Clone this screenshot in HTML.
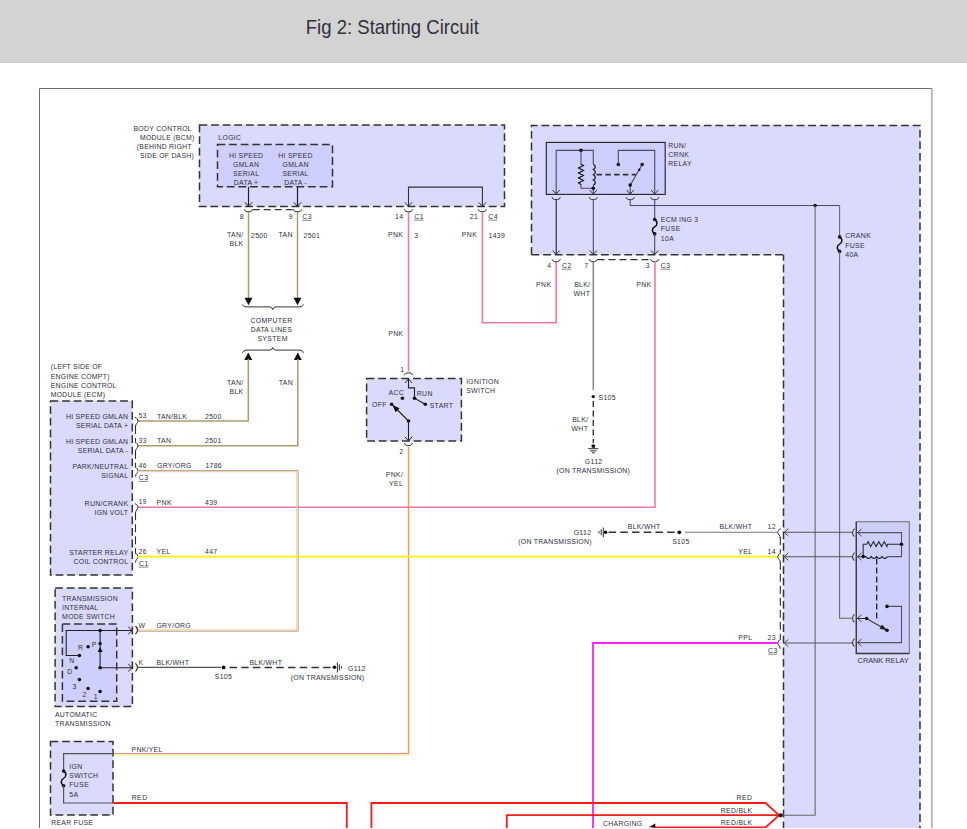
<!DOCTYPE html>
<html><head><meta charset="utf-8"><style>
html,body{margin:0;padding:0;background:#fff;width:967px;height:829px;overflow:hidden}
svg{display:block;font-family:"Liberation Sans",sans-serif}
</style></head><body>
<svg width="967" height="829" viewBox="0 0 967 829">
<rect x="0" y="0" width="967" height="63" fill="#d3d3d3"/>
<rect x="0" y="62" width="967" height="1" fill="#cacaca"/>
<text x="305.8" y="33.8" font-size="20.8" fill="#30303f" textLength="173" lengthAdjust="spacingAndGlyphs">Fig 2: Starting Circuit</text>
<path d="M39.5,829 L39.5,88.5 L931.8,88.5" fill="none" stroke="#6e6e6e" stroke-width="1"/>
<path d="M931.9,88.5 L931.9,829" fill="none" stroke="#9a9a9a" stroke-width="1.3"/>
<path d="M531.5,125.5 L920,125.5 L920,829 L783.5,829 L783.5,254.8 L531.5,254.8 Z" fill="#dadaff" stroke="none"/>
<path d="M531.5,254.8 L531.5,125.5 L920,125.5 L920,829" fill="none" stroke="#333" stroke-width="1.5" stroke-dasharray="7.8 3.8"/>
<path d="M531.5,254.8 L783.5,254.8" fill="none" stroke="#333" stroke-width="1.5" stroke-dasharray="7.8 3.8"/>
<path d="M783.5,254.8 L783.5,829" fill="none" stroke="#333" stroke-width="1.5" stroke-dasharray="7.8 3.8" stroke-dashoffset="1.8"/>
<rect x="199.5" y="125" width="305.0" height="81.5" fill="#dadaff" stroke="#333" stroke-width="1.5" stroke-dasharray="7.8 3.8"/>
<rect x="217.5" y="144.5" width="115.0" height="42.30000000000001" fill="#cfcfff" stroke="#333" stroke-width="1.5" stroke-dasharray="7.8 3.8"/>
<text x="218.3" y="140.1" font-size="6.90" fill="#30303e" text-anchor="start" textLength="22.72" lengthAdjust="spacing">LOGIC</text>
<text x="246" y="158.2" font-size="6.90" fill="#30303e" text-anchor="middle" textLength="34.08" lengthAdjust="spacing">HI SPEED</text>
<text x="246" y="167.2" font-size="6.90" fill="#30303e" text-anchor="middle" textLength="25.96" lengthAdjust="spacing">GMLAN</text>
<text x="246" y="176.2" font-size="6.90" fill="#30303e" text-anchor="middle" textLength="25.97" lengthAdjust="spacing">SERIAL</text>
<text x="246" y="185.2" font-size="6.90" fill="#30303e" text-anchor="middle" textLength="24.27" lengthAdjust="spacing">DATA +</text>
<text x="295.4" y="158.2" font-size="6.90" fill="#30303e" text-anchor="middle" textLength="34.08" lengthAdjust="spacing">HI SPEED</text>
<text x="295.4" y="167.2" font-size="6.90" fill="#30303e" text-anchor="middle" textLength="25.96" lengthAdjust="spacing">GMLAN</text>
<text x="295.4" y="176.2" font-size="6.90" fill="#30303e" text-anchor="middle" textLength="25.97" lengthAdjust="spacing">SERIAL</text>
<text x="295.4" y="185.2" font-size="6.90" fill="#30303e" text-anchor="middle" textLength="22.44" lengthAdjust="spacing">DATA -</text>
<text x="133.4" y="131.2" font-size="6.90" fill="#30303e" text-anchor="start" textLength="58.27" lengthAdjust="spacing">BODY CONTROL</text>
<text x="139.9" y="140.2" font-size="6.90" fill="#30303e" text-anchor="start" textLength="54.34" lengthAdjust="spacing">MODULE (BCM)</text>
<text x="136.8" y="149.2" font-size="6.90" fill="#30303e" text-anchor="start" textLength="54.75" lengthAdjust="spacing">(BEHIND RIGHT</text>
<text x="139.9" y="158.2" font-size="6.90" fill="#30303e" text-anchor="start" textLength="53.94" lengthAdjust="spacing">SIDE OF DASH)</text>
<path d="M248.5,186.8 L248.5,206.5" fill="none" stroke="#222" stroke-width="1.2"/>
<path d="M244.9,202.3 L248.5,206.3 L252.1,202.3" fill="none" stroke="#222" stroke-width="1"/>
<path d="M244.3,209.3 Q245.3,211.70000000000002 247.0,211.70000000000002 L250.0,211.70000000000002 Q251.7,211.70000000000002 252.7,209.3" fill="none" stroke="#333" stroke-width="1"/>
<path d="M297.5,186.8 L297.5,206.5" fill="none" stroke="#222" stroke-width="1.2"/>
<path d="M293.9,202.3 L297.5,206.3 L301.1,202.3" fill="none" stroke="#222" stroke-width="1"/>
<path d="M293.3,209.3 Q294.3,211.70000000000002 296.0,211.70000000000002 L299.0,211.70000000000002 Q300.7,211.70000000000002 301.7,209.3" fill="none" stroke="#333" stroke-width="1"/>
<path d="M252.7,209.6 L293.3,209.6" fill="none" stroke="#333" stroke-width="1.2" stroke-dasharray="7 4"/>
<path d="M248.5,212 L248.5,299" fill="none" stroke="#ad9c6c" stroke-width="1.5"/>
<path d="M244.5,297.8 L252.5,297.8 L248.5,305.3 Z" fill="#111"/>
<path d="M297.5,212 L297.5,299" fill="none" stroke="#ad9c6c" stroke-width="1.5"/>
<path d="M293.5,297.8 L301.5,297.8 L297.5,305.3 Z" fill="#111"/>
<text x="243.5" y="219.1" font-size="6.90" fill="#30303e" text-anchor="end">8</text>
<text x="292.6" y="219.1" font-size="6.90" fill="#30303e" text-anchor="end">9</text>
<text x="302.3" y="219.1" font-size="6.90" fill="#30303e" text-anchor="start" textLength="9.33" lengthAdjust="spacing">C3</text>
<line x1="302.3" y1="220.3" x2="311.6" y2="220.3" stroke="#30303e" stroke-width="0.6"/>
<text x="243.2" y="237.2" font-size="6.90" fill="#30303e" text-anchor="end" textLength="16.09" lengthAdjust="spacing">TAN/</text>
<text x="243.2" y="246.3" font-size="6.90" fill="#30303e" text-anchor="end" textLength="13.80" lengthAdjust="spacing">BLK</text>
<text x="251" y="238.1" font-size="6.90" fill="#30303e" text-anchor="start" textLength="16.24" lengthAdjust="spacing">2500</text>
<text x="292.6" y="237.2" font-size="6.90" fill="#30303e" text-anchor="end" textLength="14.06" lengthAdjust="spacing">TAN</text>
<text x="303.5" y="238.1" font-size="6.90" fill="#30303e" text-anchor="start" textLength="16.24" lengthAdjust="spacing">2501</text>
<path d="M408.5,206.5 L408.5,187.1 L482.4,187.1 L482.4,206.5" fill="none" stroke="#333" stroke-width="1.1"/>
<path d="M404.9,202.3 L408.5,206.3 L412.1,202.3" fill="none" stroke="#333" stroke-width="1"/>
<path d="M478.79999999999995,202.3 L482.4,206.3 L486.0,202.3" fill="none" stroke="#333" stroke-width="1"/>
<path d="M404.3,209.3 Q405.3,211.70000000000002 407.0,211.70000000000002 L410.0,211.70000000000002 Q411.7,211.70000000000002 412.7,209.3" fill="none" stroke="#333" stroke-width="1"/>
<path d="M478.2,209.3 Q479.2,211.70000000000002 480.9,211.70000000000002 L483.9,211.70000000000002 Q485.59999999999997,211.70000000000002 486.59999999999997,209.3" fill="none" stroke="#333" stroke-width="1"/>
<text x="403.1" y="218.9" font-size="6.90" fill="#30303e" text-anchor="end" textLength="8.12" lengthAdjust="spacing">14</text>
<text x="414.3" y="218.9" font-size="6.90" fill="#30303e" text-anchor="start" textLength="9.33" lengthAdjust="spacing">C1</text>
<line x1="414.3" y1="220.1" x2="423.6" y2="220.1" stroke="#30303e" stroke-width="0.6"/>
<text x="477.9" y="218.9" font-size="6.90" fill="#30303e" text-anchor="end" textLength="8.12" lengthAdjust="spacing">21</text>
<text x="488.2" y="218.9" font-size="6.90" fill="#30303e" text-anchor="start" textLength="9.33" lengthAdjust="spacing">C4</text>
<line x1="488.2" y1="220.1" x2="497.5" y2="220.1" stroke="#30303e" stroke-width="0.6"/>
<text x="402.9" y="237.1" font-size="6.90" fill="#30303e" text-anchor="end" textLength="15.01" lengthAdjust="spacing">PNK</text>
<text x="414.3" y="237.7" font-size="6.90" fill="#30303e" text-anchor="start">3</text>
<text x="476.8" y="237.1" font-size="6.90" fill="#30303e" text-anchor="end" textLength="15.01" lengthAdjust="spacing">PNK</text>
<text x="488.6" y="237.7" font-size="6.90" fill="#30303e" text-anchor="start" textLength="16.24" lengthAdjust="spacing">1439</text>
<path d="M408.5,212 L408.5,371.5" fill="none" stroke="#f5789c" stroke-width="1.6"/>
<path d="M482.4,212 L482.4,322.7 L556.2,322.7 L556.2,261" fill="none" stroke="#f5789c" stroke-width="1.6"/>
<text x="403.2" y="336.1" font-size="6.90" fill="#30303e" text-anchor="end" textLength="15.01" lengthAdjust="spacing">PNK</text>
<text x="404" y="371.9" font-size="6.43" fill="#30303e" text-anchor="end">1</text>
<path d="M242.5,304.4 Q243.5,306.9 246,306.9 L270,306.9 Q272.3,307.2 272.8,309.6 Q273.3,307.2 275.6,306.9 L300,306.9 Q302.5,306.9 303.5,304.4" fill="none" stroke="#333" stroke-width="1"/>
<path d="M242.5,352.8 Q243.5,350.1 246,350.1 L270,350.1 Q272.3,349.8 272.8,347.4 Q273.3,349.8 275.6,350.1 L300,350.1 Q302.5,350.1 303.5,352.8" fill="none" stroke="#333" stroke-width="1"/>
<text x="271.4" y="323.1" font-size="6.90" fill="#30303e" text-anchor="middle" textLength="41.77" lengthAdjust="spacing">COMPUTER</text>
<text x="271.4" y="332.2" font-size="6.90" fill="#30303e" text-anchor="middle" textLength="41.11" lengthAdjust="spacing">DATA LINES</text>
<text x="272.4" y="340.9" font-size="6.90" fill="#30303e" text-anchor="middle" textLength="30.02" lengthAdjust="spacing">SYSTEM</text>
<path d="M244.3,359.9 L252.3,359.9 L248.3,352.4 Z" fill="#111"/>
<path d="M293.8,359.9 L301.8,359.9 L297.8,352.4 Z" fill="#111"/>
<path d="M248.3,359 L248.3,420.9 L137.4,420.9" fill="none" stroke="#ad9c6c" stroke-width="1.5"/>
<path d="M297.8,359 L297.8,445.7 L137.4,445.7" fill="none" stroke="#ad9c6c" stroke-width="1.5"/>
<text x="243.2" y="385.0" font-size="6.90" fill="#30303e" text-anchor="end" textLength="16.09" lengthAdjust="spacing">TAN/</text>
<text x="243.2" y="394.1" font-size="6.90" fill="#30303e" text-anchor="end" textLength="13.80" lengthAdjust="spacing">BLK</text>
<text x="292.8" y="385.0" font-size="6.90" fill="#30303e" text-anchor="end" textLength="14.06" lengthAdjust="spacing">TAN</text>
<rect x="366.6" y="378.6" width="94.79999999999995" height="62.39999999999998" fill="#dadaff" stroke="#333" stroke-width="1.5" stroke-dasharray="7.8 3.8"/>
<path d="M404.3,375.3 Q405.3,372.90000000000003 407.0,372.90000000000003 L410.0,372.90000000000003 Q411.7,372.90000000000003 412.7,375.3" fill="none" stroke="#333" stroke-width="1"/>
<path d="M408.5,379 L408.5,387.9 L414.5,387.9 L414.5,398.2 L425.3,404.3" fill="none" stroke="#222" stroke-width="1.1"/>
<path d="M404.9,383 L408.5,379 L412.1,383" fill="none" stroke="#222" stroke-width="1"/>
<circle cx="402.4" cy="398.2" r="1.8" fill="#111"/>
<circle cx="414.5" cy="398.2" r="1.8" fill="#111"/>
<circle cx="425.3" cy="404.3" r="1.8" fill="#111"/>
<circle cx="391.6" cy="404.3" r="1.8" fill="#111"/>
<circle cx="408.5" cy="421" r="1.8" fill="#111"/>
<path d="M408.5,441 L408.5,421 L393,405.5" fill="none" stroke="#222" stroke-width="1.1"/>
<path d="M392.4,405.1 L399.6,408.2 L395.6,412.2 Z" fill="#111"/>
<path d="M404.9,436.8 L408.5,440.8 L412.1,436.8" fill="none" stroke="#222" stroke-width="1"/>
<path d="M404.3,443 Q405.3,445.4 407.0,445.4 L410.0,445.4 Q411.7,445.4 412.7,443" fill="none" stroke="#333" stroke-width="1"/>
<text x="403.8" y="395.2" font-size="6.90" fill="#30303e" text-anchor="end" textLength="15.41" lengthAdjust="spacing">ACC</text>
<text x="416.7" y="395.7" font-size="6.90" fill="#30303e" text-anchor="start" textLength="15.82" lengthAdjust="spacing">RUN</text>
<text x="386.5" y="406.9" font-size="6.90" fill="#30303e" text-anchor="end" textLength="14.60" lengthAdjust="spacing">OFF</text>
<text x="429.7" y="407.6" font-size="6.90" fill="#30303e" text-anchor="start" textLength="23.25" lengthAdjust="spacing">START</text>
<text x="466.2" y="384.4" font-size="6.90" fill="#30303e" text-anchor="start" textLength="32.44" lengthAdjust="spacing">IGNITION</text>
<text x="466.2" y="392.8" font-size="6.90" fill="#30303e" text-anchor="start" textLength="28.79" lengthAdjust="spacing">SWITCH</text>
<text x="403" y="454.0" font-size="6.43" fill="#30303e" text-anchor="end">2</text>
<path d="M409.5,447.0 L409.5,754.6 L113.0,754.6" fill="none" stroke="#fff07a" stroke-width="1.1"/>
<path d="M408.4,447.0 L408.4,753.5 L113.0,753.5" fill="none" stroke="#f48aa4" stroke-width="1.2"/>
<text x="402.9" y="477.1" font-size="6.90" fill="#30303e" text-anchor="end" textLength="17.04" lengthAdjust="spacing">PNK/</text>
<text x="402.9" y="485.8" font-size="6.90" fill="#30303e" text-anchor="end" textLength="13.80" lengthAdjust="spacing">YEL</text>
<rect x="546.3" y="142.4" width="118.9" height="52" fill="#cfcfff" stroke="#262630" stroke-width="1.15"/>
<text x="668.2" y="148.4" font-size="6.90" fill="#30303e" text-anchor="start" textLength="17.84" lengthAdjust="spacing">RUN/</text>
<text x="668.2" y="157.1" font-size="6.90" fill="#30303e" text-anchor="start" textLength="20.69" lengthAdjust="spacing">CRNK</text>
<text x="668.2" y="166.1" font-size="6.90" fill="#30303e" text-anchor="start" textLength="23.40" lengthAdjust="spacing">RELAY</text>
<path d="M556.2,194 L556.2,150.4 L593.3,150.4 L593.3,164" fill="none" stroke="#4a4a60" stroke-width="1.1"/>
<circle cx="581" cy="150.4" r="1.8" fill="#111"/>
<path d="M581,150.4 L581,164.3 L583.6,165.5 L578.4,167.9 L583.6,170.4 L578.4,172.9 L583.6,175.4 L578.4,177.9 L583.6,180.4 L578.4,182.9 L581,184.6 L581,188.3 L593.3,188.3" fill="none" stroke="#4a4a60" stroke-width="1.1"/>
<path d="M581,164.3 L583.6,165.5 L578.4,167.9 L583.6,170.4 L578.4,172.9 L583.6,175.4 L578.4,177.9 L583.6,180.4 L578.4,182.9 L581,184.6" fill="none" stroke="#1a1a22" stroke-width="1.0"/>
<path d="M593.3,164.3 q4,2.6 0,5.25 q4,2.6 0,5.25 q4,2.6 0,5.25 q4,2.6 0,5.25" fill="none" stroke="#1a1a22" stroke-width="1.3"/>
<path d="M593.3,185.3 L593.3,194" fill="none" stroke="#4a4a60" stroke-width="1.1"/>
<circle cx="593.3" cy="188.3" r="1.8" fill="#111"/>
<path d="M596.5,174.7 L636,174.7" fill="none" stroke="#333" stroke-width="1.7" stroke-dasharray="5.5 3.3"/>
<path d="M618.3,164.5 L618.3,150.4 L654.7,150.4 L654.7,194" fill="none" stroke="#4a4a60" stroke-width="1.1"/>
<circle cx="618.3" cy="164.5" r="1.8" fill="#111"/>
<path d="M630.2,194 L630.2,185.1 L642.2,164.5" fill="none" stroke="#4a4a60" stroke-width="1.1"/>
<circle cx="630.2" cy="185.1" r="1.8" fill="#111"/>
<circle cx="642.2" cy="164.5" r="1.8" fill="#111"/>
<circle cx="639.3" cy="169.7" r="1.2" fill="#111"/>
<path d="M552.6,190 L556.2,194 L559.8000000000001,190" fill="none" stroke="#333" stroke-width="1"/>
<path d="M552.0,197.2 Q553.0,199.6 554.7,199.6 L557.7,199.6 Q559.4000000000001,199.6 560.4000000000001,197.2" fill="none" stroke="#333" stroke-width="1"/>
<path d="M589.6999999999999,190 L593.3,194 L596.9,190" fill="none" stroke="#333" stroke-width="1"/>
<path d="M589.0999999999999,197.2 Q590.0999999999999,199.6 591.8,199.6 L594.8,199.6 Q596.5,199.6 597.5,197.2" fill="none" stroke="#333" stroke-width="1"/>
<path d="M626.6,190 L630.2,194 L633.8000000000001,190" fill="none" stroke="#333" stroke-width="1"/>
<path d="M626.0,197.2 Q627.0,199.6 628.7,199.6 L631.7,199.6 Q633.4000000000001,199.6 634.4000000000001,197.2" fill="none" stroke="#333" stroke-width="1"/>
<path d="M651.1,190 L654.7,194 L658.3000000000001,190" fill="none" stroke="#333" stroke-width="1"/>
<path d="M650.5,197.2 Q651.5,199.6 653.2,199.6 L656.2,199.6 Q657.9000000000001,199.6 658.9000000000001,197.2" fill="none" stroke="#333" stroke-width="1"/>
<path d="M556.2,199.5 L556.2,254.5" fill="none" stroke="#222" stroke-width="1.1"/>
<path d="M593.3,199.5 L593.3,254.5" fill="none" stroke="#4a4a60" stroke-width="1.1"/>
<path d="M630.2,199.5 L630.2,205.5 L839.6,205.5" fill="none" stroke="#4a4a60" stroke-width="1.1"/>
<path d="M654.7,199.5 L654.7,219.5" fill="none" stroke="#4a4a60" stroke-width="1.1"/>
<path d="M654.7,219.5 C658.2,221.5 657.2,225.7 654.7,226.7 C652.2,227.7 651.2,231.9 654.7,233.9" fill="none" stroke="#111" stroke-width="1.5"/>
<circle cx="654.7" cy="219.5" r="1.8" fill="#111"/>
<circle cx="654.7" cy="233.9" r="1.8" fill="#111"/>
<path d="M654.7,233.9 L654.7,254.5" fill="none" stroke="#4a4a60" stroke-width="1.1"/>
<path d="M552.6,250.5 L556.2,254.5 L559.8000000000001,250.5" fill="none" stroke="#333" stroke-width="1"/>
<path d="M552.0,259.2 Q553.0,261.59999999999997 554.7,261.59999999999997 L557.7,261.59999999999997 Q559.4000000000001,261.59999999999997 560.4000000000001,259.2" fill="none" stroke="#333" stroke-width="1"/>
<path d="M589.6999999999999,250.5 L593.3,254.5 L596.9,250.5" fill="none" stroke="#333" stroke-width="1"/>
<path d="M589.0999999999999,259.2 Q590.0999999999999,261.59999999999997 591.8,261.59999999999997 L594.8,261.59999999999997 Q596.5,261.59999999999997 597.5,259.2" fill="none" stroke="#333" stroke-width="1"/>
<path d="M651.1,250.5 L654.7,254.5 L658.3000000000001,250.5" fill="none" stroke="#333" stroke-width="1"/>
<path d="M650.5,259.2 Q651.5,261.59999999999997 653.2,261.59999999999997 L656.2,261.59999999999997 Q657.9000000000001,261.59999999999997 658.9000000000001,259.2" fill="none" stroke="#333" stroke-width="1"/>
<path d="M597.5,259.6 L650.5,259.6" fill="none" stroke="#333" stroke-width="1.3" stroke-dasharray="7 4"/>
<text x="660.8" y="222.1" font-size="6.90" fill="#30303e" text-anchor="start" textLength="37.32" lengthAdjust="spacing">ECM ING 3</text>
<text x="660.8" y="231.1" font-size="6.90" fill="#30303e" text-anchor="start" textLength="19.47" lengthAdjust="spacing">FUSE</text>
<text x="660.8" y="241.1" font-size="6.90" fill="#30303e" text-anchor="start" textLength="12.99" lengthAdjust="spacing">10A</text>
<circle cx="815.1" cy="205.5" r="1.8" fill="#111"/>
<path d="M815.1,205.5 L815.1,815.3 L780.3,815.3" fill="none" stroke="#666" stroke-width="1.1"/>
<path d="M839.6,205.5 L839.6,236.9" fill="none" stroke="#666" stroke-width="1.1"/>
<path d="M839.6,236.9 C843.1,238.9 842.1,243.15 839.6,244.15 C837.1,245.15 836.1,249.4 839.6,251.4" fill="none" stroke="#111" stroke-width="1.5"/>
<circle cx="839.6" cy="236.9" r="1.8" fill="#111"/>
<circle cx="839.6" cy="251.4" r="1.8" fill="#111"/>
<path d="M839.6,251.4 L839.6,618.3 L852,618.3" fill="none" stroke="#666" stroke-width="1.1"/>
<text x="845.2" y="238.3" font-size="6.90" fill="#30303e" text-anchor="start" textLength="25.55" lengthAdjust="spacing">CRANK</text>
<text x="845.2" y="247.8" font-size="6.90" fill="#30303e" text-anchor="start" textLength="19.47" lengthAdjust="spacing">FUSE</text>
<text x="845.2" y="257.1" font-size="6.90" fill="#30303e" text-anchor="start" textLength="12.99" lengthAdjust="spacing">40A</text>
<text x="551" y="268.0" font-size="6.90" fill="#30303e" text-anchor="end">4</text>
<text x="562" y="268.0" font-size="6.90" fill="#30303e" text-anchor="start" textLength="9.33" lengthAdjust="spacing">C2</text>
<line x1="562.0" y1="269.2" x2="571.3" y2="269.2" stroke="#30303e" stroke-width="0.6"/>
<text x="588" y="268.0" font-size="6.90" fill="#30303e" text-anchor="end">7</text>
<text x="649.5" y="268.0" font-size="6.90" fill="#30303e" text-anchor="end">3</text>
<text x="660.8" y="268.0" font-size="6.90" fill="#30303e" text-anchor="start" textLength="9.33" lengthAdjust="spacing">C3</text>
<line x1="660.8" y1="269.2" x2="670.1" y2="269.2" stroke="#30303e" stroke-width="0.6"/>
<text x="551" y="287.2" font-size="6.90" fill="#30303e" text-anchor="end" textLength="15.01" lengthAdjust="spacing">PNK</text>
<text x="590" y="287.1" font-size="6.90" fill="#30303e" text-anchor="end" textLength="15.83" lengthAdjust="spacing">BLK/</text>
<text x="590" y="296.1" font-size="6.90" fill="#30303e" text-anchor="end" textLength="16.62" lengthAdjust="spacing">WHT</text>
<text x="651.2" y="287.2" font-size="6.90" fill="#30303e" text-anchor="end" textLength="15.01" lengthAdjust="spacing">PNK</text>
<path d="M593.3,261.5 L593.3,390" fill="none" stroke="#8a8a8a" stroke-width="1.6"/>
<circle cx="593.3" cy="396.6" r="1.7" fill="#111"/>
<path d="M593.3,401 L593.3,443" fill="none" stroke="#333" stroke-width="1.4" stroke-dasharray="6 3.5"/>
<circle cx="593.3" cy="446.1" r="1.9" fill="#111"/>
<path d="M588.3,448.7 L598.3,448.7" fill="none" stroke="#111" stroke-width="0.9"/>
<path d="M590.0999999999999,450.9 L596.5,450.9" fill="none" stroke="#111" stroke-width="0.9"/>
<path d="M591.8,452.9 L594.8,452.9" fill="none" stroke="#111" stroke-width="0.9"/>
<text x="598.5" y="400.2" font-size="6.90" fill="#30303e" text-anchor="start" textLength="17.05" lengthAdjust="spacing">S105</text>
<text x="588" y="421.8" font-size="6.90" fill="#30303e" text-anchor="end" textLength="15.83" lengthAdjust="spacing">BLK/</text>
<text x="588" y="431.0" font-size="6.90" fill="#30303e" text-anchor="end" textLength="16.62" lengthAdjust="spacing">WHT</text>
<text x="593.5" y="464.0" font-size="6.90" fill="#30303e" text-anchor="middle" textLength="17.31" lengthAdjust="spacing">G112</text>
<text x="593.2" y="473.1" font-size="6.90" fill="#30303e" text-anchor="middle" textLength="73.27" lengthAdjust="spacing">(ON TRANSMISSION)</text>
<path d="M655,261.5 L655,507.3 L137.4,507.3" fill="none" stroke="#f5789c" stroke-width="1.6"/>
<text x="50.7" y="369.3" font-size="6.90" fill="#30303e" text-anchor="start" textLength="51.38" lengthAdjust="spacing">(LEFT SIDE OF</text>
<text x="50.7" y="378.5" font-size="6.90" fill="#30303e" text-anchor="start" textLength="58.81" lengthAdjust="spacing">ENGINE COMPT)</text>
<text x="50.7" y="387.7" font-size="6.90" fill="#30303e" text-anchor="start" textLength="65.71" lengthAdjust="spacing">ENGINE CONTROL</text>
<text x="50.7" y="396.9" font-size="6.90" fill="#30303e" text-anchor="start" textLength="54.34" lengthAdjust="spacing">MODULE (ECM)</text>
<rect x="50.5" y="401" width="81.80000000000001" height="174.10000000000002" fill="#dadaff" stroke="#333" stroke-width="1.5" stroke-dasharray="7.8 3.8"/>
<text x="128" y="419.1" font-size="6.90" fill="#30303e" text-anchor="end" textLength="62.06" lengthAdjust="spacing">HI SPEED GMLAN</text>
<text x="128" y="428.1" font-size="6.90" fill="#30303e" text-anchor="end" textLength="52.00" lengthAdjust="spacing">SERIAL DATA +</text>
<text x="128" y="444.1" font-size="6.90" fill="#30303e" text-anchor="end" textLength="62.06" lengthAdjust="spacing">HI SPEED GMLAN</text>
<text x="128" y="453.2" font-size="6.90" fill="#30303e" text-anchor="end" textLength="50.17" lengthAdjust="spacing">SERIAL DATA -</text>
<text x="128" y="469.1" font-size="6.90" fill="#30303e" text-anchor="end" textLength="55.44" lengthAdjust="spacing">PARK/NEUTRAL</text>
<text x="128" y="478.2" font-size="6.90" fill="#30303e" text-anchor="end" textLength="26.78" lengthAdjust="spacing">SIGNAL</text>
<text x="128" y="506.0" font-size="6.90" fill="#30303e" text-anchor="end" textLength="43.40" lengthAdjust="spacing">RUN/CRANK</text>
<text x="128" y="515.1" font-size="6.90" fill="#30303e" text-anchor="end" textLength="33.53" lengthAdjust="spacing">IGN VOLT</text>
<text x="128" y="555.0" font-size="6.90" fill="#30303e" text-anchor="end" textLength="58.82" lengthAdjust="spacing">STARTER RELAY</text>
<text x="128" y="564.1" font-size="6.90" fill="#30303e" text-anchor="end" textLength="54.49" lengthAdjust="spacing">COIL CONTROL</text>
<path d="M134.9,417.29999999999995 C137.1,417.7 137.7,419.7 138.1,421.29999999999995 C137.7,422.9 135.5,423.9 135.5,426.7" fill="none" stroke="#2a2a2a" stroke-width="1"/>
<path d="M134.9,442.09999999999997 C137.1,442.5 137.7,444.5 138.1,446.09999999999997 C137.7,447.7 135.5,448.7 135.5,451.5" fill="none" stroke="#2a2a2a" stroke-width="1"/>
<path d="M134.9,467.2 C137.1,467.6 137.7,469.6 138.1,471.2 C137.7,472.8 135.5,473.8 135.5,476.6" fill="none" stroke="#2a2a2a" stroke-width="1"/>
<path d="M134.9,503.7 C137.1,504.1 137.7,506.1 138.1,507.7 C137.7,509.3 135.5,510.3 135.5,513.1" fill="none" stroke="#2a2a2a" stroke-width="1"/>
<path d="M134.9,553.1 C137.1,553.5 137.7,555.5 138.1,557.1 C137.7,558.7 135.5,559.7 135.5,562.5" fill="none" stroke="#2a2a2a" stroke-width="1"/>
<path d="M135.5,425.9 L135.5,441.7" fill="none" stroke="#2a2a2a" stroke-width="1.1" stroke-dasharray="8 4"/>
<path d="M135.5,450.7 L135.5,466.8" fill="none" stroke="#2a2a2a" stroke-width="1.1" stroke-dasharray="8 4"/>
<path d="M135.5,512.3 L135.5,552.7" fill="none" stroke="#2a2a2a" stroke-width="1.1" stroke-dasharray="8 4"/>
<text x="138.7" y="418.3" font-size="6.43" fill="#30303e" text-anchor="start" textLength="7.56" lengthAdjust="spacing">53</text>
<text x="138.7" y="443.1" font-size="6.43" fill="#30303e" text-anchor="start" textLength="7.56" lengthAdjust="spacing">33</text>
<text x="138.7" y="467.6" font-size="6.43" fill="#30303e" text-anchor="start" textLength="7.56" lengthAdjust="spacing">46</text>
<text x="138.7" y="504.3" font-size="6.43" fill="#30303e" text-anchor="start" textLength="7.56" lengthAdjust="spacing">19</text>
<text x="138.7" y="553.6" font-size="6.43" fill="#30303e" text-anchor="start" textLength="7.56" lengthAdjust="spacing">26</text>
<text x="138.7" y="480.2" font-size="6.90" fill="#30303e" text-anchor="start" textLength="9.33" lengthAdjust="spacing">C3</text>
<line x1="138.7" y1="481.4" x2="148.0" y2="481.4" stroke="#30303e" stroke-width="0.6"/>
<text x="139" y="565.9" font-size="6.90" fill="#30303e" text-anchor="start" textLength="9.33" lengthAdjust="spacing">C1</text>
<line x1="139.0" y1="567.1" x2="148.3" y2="567.1" stroke="#30303e" stroke-width="0.6"/>
<text x="157" y="418.5" font-size="6.90" fill="#30303e" text-anchor="start" textLength="29.88" lengthAdjust="spacing">TAN/BLK</text>
<text x="205" y="418.5" font-size="6.90" fill="#30303e" text-anchor="start" textLength="16.24" lengthAdjust="spacing">2500</text>
<text x="157" y="443.3" font-size="6.90" fill="#30303e" text-anchor="start" textLength="14.06" lengthAdjust="spacing">TAN</text>
<text x="205" y="443.3" font-size="6.90" fill="#30303e" text-anchor="start" textLength="16.24" lengthAdjust="spacing">2501</text>
<text x="157" y="467.8" font-size="6.90" fill="#30303e" text-anchor="start" textLength="34.34" lengthAdjust="spacing">GRY/ORG</text>
<text x="205.4" y="467.8" font-size="6.90" fill="#30303e" text-anchor="start" textLength="16.24" lengthAdjust="spacing">1786</text>
<text x="156.5" y="504.5" font-size="6.90" fill="#30303e" text-anchor="start" textLength="15.01" lengthAdjust="spacing">PNK</text>
<text x="205" y="504.5" font-size="6.90" fill="#30303e" text-anchor="start" textLength="12.18" lengthAdjust="spacing">439</text>
<text x="156.5" y="553.8" font-size="6.90" fill="#30303e" text-anchor="start" textLength="13.80" lengthAdjust="spacing">YEL</text>
<text x="205" y="553.8" font-size="6.90" fill="#30303e" text-anchor="start" textLength="12.18" lengthAdjust="spacing">447</text>
<path d="M137.4,470.4 L298.1,470.4 L298.1,631.2 L137.5,631.2" fill="none" stroke="#aaa09a" stroke-width="1.0"/>
<path d="M137.4,471.6 L296.9,471.6 L296.9,630.0 L137.5,630.0" fill="none" stroke="#f7cfa6" stroke-width="1.3"/>
<path d="M137.4,556.7 L778,556.7" fill="none" stroke="#fcf400" stroke-width="1.8"/>
<rect x="55.1" y="587.9" width="77.30000000000001" height="118.70000000000005" fill="#dadaff" stroke="#333" stroke-width="1.5" stroke-dasharray="7.8 3.8"/>
<rect x="62.4" y="623.9" width="54.300000000000004" height="77.39999999999998" fill="#cfcfff" stroke="#333" stroke-width="1.5" stroke-dasharray="7.8 3.8"/>
<text x="62.1" y="601.2" font-size="6.90" fill="#30303e" text-anchor="start" textLength="55.57" lengthAdjust="spacing">TRANSMISSION</text>
<text x="62.1" y="610.1" font-size="6.90" fill="#30303e" text-anchor="start" textLength="36.10" lengthAdjust="spacing">INTERNAL</text>
<text x="62.1" y="619.2" font-size="6.90" fill="#30303e" text-anchor="start" textLength="52.72" lengthAdjust="spacing">MODE SWITCH</text>
<text x="54.9" y="717.0" font-size="6.90" fill="#30303e" text-anchor="start" textLength="42.31" lengthAdjust="spacing">AUTOMATIC</text>
<text x="54.9" y="725.7" font-size="6.90" fill="#30303e" text-anchor="start" textLength="55.57" lengthAdjust="spacing">TRANSMISSION</text>
<path d="M79.4,655.5 L66.2,655.5 L66.2,630.5 L132,630.5" fill="none" stroke="#222" stroke-width="1.1"/>
<path d="M100.1,630.5 L100.1,667.7 L132,667.7" fill="none" stroke="#222" stroke-width="1.1"/>
<path d="M128.2,626.9 L132.2,630.5 L128.2,634.1" fill="none" stroke="#333" stroke-width="1"/>
<path d="M128.2,664.1 L132.2,667.7 L128.2,671.3000000000001" fill="none" stroke="#333" stroke-width="1"/>
<path d="M100.1,647 L102.6,652 L97.6,652 Z" fill="#111"/>
<circle cx="100.1" cy="630.5" r="1.8" fill="#111"/>
<circle cx="79.4" cy="655.5" r="1.8" fill="#111"/>
<circle cx="100.1" cy="643.6" r="1.8" fill="#111"/>
<circle cx="88.1" cy="646.8" r="1.8" fill="#111"/>
<circle cx="100.1" cy="667.7" r="1.8" fill="#111"/>
<circle cx="76.2" cy="667.7" r="1.8" fill="#111"/>
<circle cx="79.4" cy="679.6" r="1.8" fill="#111"/>
<circle cx="88.1" cy="688.5" r="1.8" fill="#111"/>
<circle cx="100.1" cy="691.5" r="1.8" fill="#111"/>
<text x="80.5" y="649.8" font-size="6.90" fill="#30303e" text-anchor="middle">R</text>
<text x="94.1" y="646.7" font-size="6.90" fill="#30303e" text-anchor="middle">P</text>
<text x="71.8" y="663.2" font-size="6.90" fill="#30303e" text-anchor="middle">N</text>
<text x="69.7" y="674.1" font-size="6.90" fill="#30303e" text-anchor="middle">D</text>
<text x="74.5" y="689.0" font-size="6.90" fill="#30303e" text-anchor="middle">3</text>
<text x="84.3" y="697.2" font-size="6.90" fill="#30303e" text-anchor="middle">2</text>
<text x="95.7" y="699.0" font-size="6.90" fill="#30303e" text-anchor="middle">1</text>
<path d="M135.5,626 Q139.5,630 135.5,634" fill="none" stroke="#222" stroke-width="1.1"/>
<path d="M135.5,663.4 Q139.5,667.4 135.5,671.4" fill="none" stroke="#222" stroke-width="1.1"/>
<text x="138.5" y="628.1" font-size="6.90" fill="#30303e" text-anchor="start">W</text>
<text x="156.4" y="628.1" font-size="6.90" fill="#30303e" text-anchor="start" textLength="34.34" lengthAdjust="spacing">GRY/ORG</text>
<text x="138.5" y="664.8" font-size="6.90" fill="#30303e" text-anchor="start">K</text>
<text x="156.4" y="664.8" font-size="6.90" fill="#30303e" text-anchor="start" textLength="32.45" lengthAdjust="spacing">BLK/WHT</text>
<path d="M138,667.4 L221,667.4" fill="none" stroke="#555" stroke-width="1.1"/>
<circle cx="223.6" cy="667.4" r="1.9" fill="#111"/>
<path d="M229.5,667.4 L333,667.4" fill="none" stroke="#333" stroke-width="1.5" stroke-dasharray="7.5 4.2"/>
<circle cx="334.4" cy="667.3" r="1.8" fill="#111"/>
<path d="M337.4,662.4 L337.4,672.4" fill="none" stroke="#111" stroke-width="0.9"/>
<path d="M339.4,664.4 L339.4,670.4" fill="none" stroke="#111" stroke-width="0.9"/>
<path d="M341.4,666.1999999999999 L341.4,668.6" fill="none" stroke="#111" stroke-width="0.9"/>
<text x="214.8" y="679.0" font-size="6.90" fill="#30303e" text-anchor="start" textLength="17.05" lengthAdjust="spacing">S105</text>
<text x="249.4" y="664.8" font-size="6.90" fill="#30303e" text-anchor="start" textLength="32.45" lengthAdjust="spacing">BLK/WHT</text>
<text x="348" y="670.8" font-size="6.90" fill="#30303e" text-anchor="start" textLength="17.31" lengthAdjust="spacing">G112</text>
<text x="290.8" y="680.3" font-size="6.90" fill="#30303e" text-anchor="start" textLength="73.27" lengthAdjust="spacing">(ON TRANSMISSION)</text>
<rect x="50.5" y="741.6" width="62.5" height="73.39999999999998" fill="#dadaff" stroke="#333" stroke-width="1.5" stroke-dasharray="7.8 3.8"/>
<path d="M113,753.7 L63.6,753.7 L63.6,770.5" fill="none" stroke="#555" stroke-width="1.2"/>
<path d="M63.6,771 C67.1,773 66.1,777.35 63.6,778.35 C61.1,779.35 60.1,783.7 63.6,785.7" fill="none" stroke="#111" stroke-width="1.5"/>
<circle cx="63.6" cy="771" r="1.8" fill="#111"/>
<circle cx="63.6" cy="785.7" r="1.8" fill="#111"/>
<path d="M63.6,785.7 L63.6,803 L113,803" fill="none" stroke="#555" stroke-width="1.2"/>
<text x="69.3" y="769.2" font-size="6.90" fill="#30303e" text-anchor="start" textLength="12.98" lengthAdjust="spacing">IGN</text>
<text x="69.3" y="778.3" font-size="6.90" fill="#30303e" text-anchor="start" textLength="28.79" lengthAdjust="spacing">SWITCH</text>
<text x="69.3" y="787.4" font-size="6.90" fill="#30303e" text-anchor="start" textLength="19.47" lengthAdjust="spacing">FUSE</text>
<text x="69.3" y="797.2" font-size="6.90" fill="#30303e" text-anchor="start" textLength="8.93" lengthAdjust="spacing">5A</text>
<text x="51.2" y="825.0" font-size="6.90" fill="#30303e" text-anchor="start" textLength="41.78" lengthAdjust="spacing">REAR FUSE</text>
<text x="131.5" y="751.5" font-size="6.90" fill="#30303e" text-anchor="start" textLength="30.84" lengthAdjust="spacing">PNK/YEL</text>
<text x="131.7" y="800.1" font-size="6.90" fill="#30303e" text-anchor="start" textLength="15.41" lengthAdjust="spacing">RED</text>
<path d="M780.9,528.6999999999999 C778.6999999999999,529.0999999999999 778.0999999999999,531.0999999999999 777.6999999999999,532.6999999999999 C778.0999999999999,534.3 780.3,535.3 780.3,538.0999999999999" fill="none" stroke="#2a2a2a" stroke-width="1"/>
<path d="M780.9,553.1 C778.6999999999999,553.5 778.0999999999999,555.5 777.6999999999999,557.1 C778.0999999999999,558.7 780.3,559.7 780.3,562.5" fill="none" stroke="#2a2a2a" stroke-width="1"/>
<path d="M780.9,639.4 C778.6999999999999,639.8 778.0999999999999,641.8 777.6999999999999,643.4 C778.0999999999999,645 780.3,646 780.3,648.8" fill="none" stroke="#2a2a2a" stroke-width="1"/>
<path d="M780.3,537.3 L780.3,552.7" fill="none" stroke="#2a2a2a" stroke-width="1.1" stroke-dasharray="8 4"/>
<path d="M780.3,561.7 L780.3,639" fill="none" stroke="#2a2a2a" stroke-width="1.1" stroke-dasharray="8 4"/>
<path d="M788.3,528.6999999999999 L784.3,532.3 L788.3,535.9" fill="none" stroke="#444" stroke-width="1"/>
<path d="M784.3,532.3 L852,532.3" fill="none" stroke="#555" stroke-width="1.1"/>
<path d="M788.3,553.1 L784.3,556.7 L788.3,560.3000000000001" fill="none" stroke="#444" stroke-width="1"/>
<path d="M784.3,556.7 L852,556.7" fill="none" stroke="#555" stroke-width="1.1"/>
<path d="M788.3,639.4 L784.3,643 L788.3,646.6" fill="none" stroke="#444" stroke-width="1"/>
<path d="M784.3,643 L852,643" fill="none" stroke="#555" stroke-width="1.1"/>
<text x="752" y="529.3" font-size="6.90" fill="#30303e" text-anchor="end" textLength="32.45" lengthAdjust="spacing">BLK/WHT</text>
<text x="775.7" y="529.3" font-size="6.90" fill="#30303e" text-anchor="end" textLength="8.12" lengthAdjust="spacing">12</text>
<text x="752" y="554.2" font-size="6.90" fill="#30303e" text-anchor="end" textLength="13.80" lengthAdjust="spacing">YEL</text>
<text x="775.7" y="554.2" font-size="6.90" fill="#30303e" text-anchor="end" textLength="8.12" lengthAdjust="spacing">14</text>
<text x="752" y="640.2" font-size="6.90" fill="#30303e" text-anchor="end" textLength="13.80" lengthAdjust="spacing">PPL</text>
<text x="775.7" y="640.2" font-size="6.90" fill="#30303e" text-anchor="end" textLength="8.12" lengthAdjust="spacing">23</text>
<text x="767.9" y="652.9" font-size="6.90" fill="#30303e" text-anchor="start" textLength="9.33" lengthAdjust="spacing">C3</text>
<line x1="767.9" y1="654.1" x2="777.2" y2="654.1" stroke="#30303e" stroke-width="0.6"/>
<path d="M685.2,532.3 L777.7,532.3" fill="none" stroke="#777" stroke-width="1.1"/>
<circle cx="679.3" cy="532.3" r="1.9" fill="#111"/>
<path d="M608.6,532.3 L675.3,532.3" fill="none" stroke="#333" stroke-width="1.5" stroke-dasharray="7.5 4.2"/>
<circle cx="605.6" cy="532.2" r="1.8" fill="#111"/>
<path d="M603.3,527.5 L603.3,537.0999999999999" fill="none" stroke="#111" stroke-width="0.9"/>
<path d="M601.1999999999999,529.3 L601.1999999999999,535.3" fill="none" stroke="#111" stroke-width="0.9"/>
<path d="M599.0,531.0999999999999 L599.0,533.5" fill="none" stroke="#111" stroke-width="0.9"/>
<text x="591" y="534.9" font-size="6.90" fill="#30303e" text-anchor="end" textLength="17.31" lengthAdjust="spacing">G112</text>
<text x="591.5" y="544.2" font-size="6.90" fill="#30303e" text-anchor="end" textLength="73.27" lengthAdjust="spacing">(ON TRANSMISSION)</text>
<text x="672.2" y="544.2" font-size="6.90" fill="#30303e" text-anchor="start" textLength="17.05" lengthAdjust="spacing">S105</text>
<text x="627.8" y="529.0" font-size="6.90" fill="#30303e" text-anchor="start" textLength="32.45" lengthAdjust="spacing">BLK/WHT</text>
<path d="M778,643 L593,643 L593,829" fill="none" stroke="#ff1eff" stroke-width="1.8"/>
<rect x="856.3" y="521.7" width="53" height="131.8" fill="#cfcfff" stroke="#777" stroke-width="1.1"/>
<path d="M856.3,521.7 L856.3,653.5 L909.3,653.5" fill="none" stroke="#3a3a44" stroke-width="1.3"/>
<path d="M854.5,528.6 Q850.5,532.6 854.5,536.6" fill="none" stroke="#444" stroke-width="1.1"/>
<path d="M861.5,529.0 L857.5,532.6 L861.5,536.2" fill="none" stroke="#444" stroke-width="1"/>
<path d="M854.5,552.6 Q850.5,556.6 854.5,560.6" fill="none" stroke="#444" stroke-width="1.1"/>
<path d="M861.5,553.0 L857.5,556.6 L861.5,560.2" fill="none" stroke="#444" stroke-width="1"/>
<path d="M854.5,614.3 Q850.5,618.3 854.5,622.3" fill="none" stroke="#444" stroke-width="1.1"/>
<path d="M861.5,614.6999999999999 L857.5,618.3 L861.5,621.9" fill="none" stroke="#444" stroke-width="1"/>
<path d="M854.5,638.6 Q850.5,642.6 854.5,646.6" fill="none" stroke="#444" stroke-width="1.1"/>
<path d="M861.5,639.0 L857.5,642.6 L861.5,646.2" fill="none" stroke="#444" stroke-width="1"/>
<path d="M856.3,532.6 L901.5,532.6 L901.5,556.6 L887.4,556.6" fill="none" stroke="#555" stroke-width="1.1"/>
<path d="M856.3,556.6 L863.2,556.6" fill="none" stroke="#555" stroke-width="1.1"/>
<path d="M863.2,556.6 L863.2,544.2 L866.7,544.2 L868.1,541.7 L870.7,546.6 L873.5,541.7 L876.1,546.6 L878.9,541.7 L881.5,546.6 L884.3,541.7 L886.9,546.6 L887.6,544.2 L901.5,544.2" fill="none" stroke="#2a2a33" stroke-width="1.05"/>
<path d="M863.2,556.6 L865.8,556.6 q2.7,3.6 5.4,0 q2.7,3.6 5.4,0 q2.7,3.6 5.4,0 q2.7,3.6 5.4,0" fill="none" stroke="#1a1a22" stroke-width="1.2"/>
<circle cx="901.5" cy="544.2" r="1.8" fill="#111"/>
<circle cx="863.2" cy="556.6" r="1.8" fill="#111"/>
<path d="M876.7,558.5 L876.7,621.5" fill="none" stroke="#222" stroke-width="1.3" stroke-dasharray="6 3"/>
<path d="M856.3,618.5 L866.6,618.5 L887,630.3" fill="none" stroke="#333" stroke-width="1.1"/>
<path d="M887,630.3 L879.5,628.8 L882,624.4 Z" fill="#222"/>
<path d="M887,606.4 L901.5,606.4 L901.5,642.6 L856.3,642.6" fill="none" stroke="#555" stroke-width="1.1"/>
<circle cx="866.6" cy="618.5" r="1.8" fill="#111"/>
<circle cx="887" cy="630.3" r="1.8" fill="#111"/>
<circle cx="887" cy="606.4" r="1.8" fill="#111"/>
<text x="857.6" y="663.1" font-size="6.90" fill="#30303e" text-anchor="start" textLength="51.20" lengthAdjust="spacingAndGlyphs">CRANK RELAY</text>
<path d="M113,803 L346.8,803 L346.8,829" fill="none" stroke="#fa1a1a" stroke-width="1.8"/>
<path d="M371.4,829 L371.4,803 L765.5,803 L779,815.2 L765.5,827.3 L652.6,827.3" fill="none" stroke="#fa1a1a" stroke-width="1.8"/>
<path d="M506.8,829 L506.8,815.2 L779,815.2" fill="none" stroke="#fa1a1a" stroke-width="1.8"/>
<path d="M648.6,827.2 L655.3,823.5 L655.3,827.2 Z" fill="#111"/>
<circle cx="780.6" cy="815.3" r="2.1" fill="#111"/>
<text x="752" y="800.0" font-size="6.90" fill="#30303e" text-anchor="end" textLength="15.41" lengthAdjust="spacing">RED</text>
<text x="752" y="812.9" font-size="6.90" fill="#30303e" text-anchor="end" textLength="31.24" lengthAdjust="spacing">RED/BLK</text>
<text x="752" y="824.5" font-size="6.90" fill="#30303e" text-anchor="end" textLength="31.24" lengthAdjust="spacing">RED/BLK</text>
<text x="602.9" y="825.8" font-size="6.90" fill="#30303e" text-anchor="start" textLength="39.34" lengthAdjust="spacing">CHARGING</text>
<rect x="0" y="828" width="967" height="1" fill="#fff"/>
</svg></body></html>
